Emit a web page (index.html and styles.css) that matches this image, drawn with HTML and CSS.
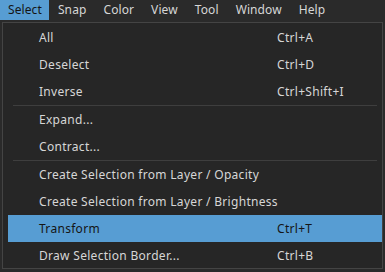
FILE: index.html
```html
<!DOCTYPE html>
<html lang="en">
<head>
    <meta charset="UTF-8">
    <title>Select menu</title>
    <link rel="stylesheet" href="styles.css">
</head>
<body>
    <div class="menubar">
        <span class="menu-title active">Select</span>
        <span class="menu-title">Snap</span>
        <span class="menu-title">Color</span>
        <span class="menu-title">View</span>
        <span class="menu-title">Tool</span>
        <span class="menu-title">Window</span>
        <span class="menu-title">Help</span>
    </div>

    <div class="dropdown">
        <div class="item"><span class="label">All</span><span class="shortcut">Ctrl+A</span></div>
        <div class="item"><span class="label">Deselect</span><span class="shortcut">Ctrl+D</span></div>
        <div class="item"><span class="label">Inverse</span><span class="shortcut">Ctrl+Shift+I</span></div>
        <div class="separator"></div>
        <div class="item"><span class="label">Expand...</span></div>
        <div class="item"><span class="label">Contract...</span></div>
        <div class="separator"></div>
        <div class="item"><span class="label">Create Selection from Layer / Opacity</span></div>
        <div class="item"><span class="label">Create Selection from Layer / Brightness</span></div>
        <div class="item selected"><span class="label">Transform</span><span class="shortcut">Ctrl+T</span></div>
        <div class="item"><span class="label">Draw Selection Border...</span><span class="shortcut">Ctrl+B</span></div>
    </div>
</body>
</html>
```

FILE: styles.css
```css
body {
    margin: 0;
    background-color: #2a2a2a;
    font-family: "Noto Sans", "Open Sans", sans-serif;
    font-size: 12px;
    color: #d6d6d6;
    width: 385px;
    height: 272px;
    overflow: hidden;
}

.menubar {
    display: flex;
    height: 22px;
    background-color: #2a2a2a;
}

.menu-title {
    padding: 0 8px;
    height: 20px;
    line-height: 20px;
    margin-right: 1px;
    letter-spacing: 0.1px;
}

    .menu-title.active {
        background-color: #579dd3;
        color: #151515;
        padding-right: 7px;
    }

.dropdown {
    margin-left: 2px;
    width: 374px;
    border: 1px solid #444444;
    background-color: #262626;
    padding: 1px 0 0 5px;
    height: 244px;
    box-sizing: content-box;
}

.item {
    display: flex;
    height: 27px;
    align-items: center;
    padding-left: 31px;
    letter-spacing: 0.3px;
}

    .item .label {
        width: 238px;
        white-space: nowrap;
    }

    .item.selected {
        background-color: #579dd3;
        color: #151515;
    }

.separator {
    height: 1px;
    background-color: #3e3e3e;
    margin: 0 5px 0 5px;
}
```
